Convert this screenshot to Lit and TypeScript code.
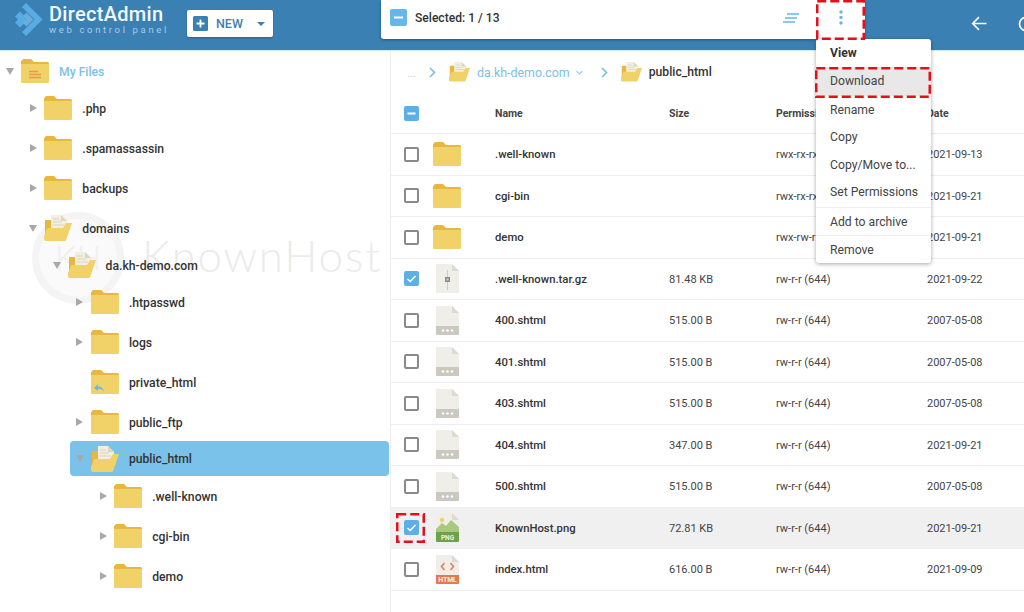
import { LitElement, html, css, svg } from "lit";
import { customElement } from "lit/decorators.js";

const folder = () => html`<svg class="ico" width="28" height="24" viewBox="0 0 28 24"><path d="M1 1.5a1.5 1.5 0 0 1 1.5-1.5H10l3 3h13.5A1.5 1.5 0 0 1 28 4.5V10H0V2z" fill="#e7b740"/><path d="M0 5h28v18a1 1 0 0 1-1 1H1a1 1 0 0 1-1-1z" fill="#f0d268"/></svg>`;
const homeFolder = () => html`<svg class="ico" width="28" height="24" viewBox="0 0 28 24"><path d="M1 1.5a1.5 1.5 0 0 1 1.5-1.5H10l3 3h13.5A1.5 1.5 0 0 1 28 4.5V10H0V2z" fill="#e7b740"/><path d="M0 5h28v18a1 1 0 0 1-1 1H1a1 1 0 0 1-1-1z" fill="#f0d268"/><path d="M8 12.500h9M8 15.500h12M8 18.500h12" stroke="#e89a4a" stroke-width="1.300"/></svg>`;
const linkFolder = () => html`<svg class="ico" width="28" height="24" viewBox="0 0 28 24"><path d="M1 1.5a1.5 1.5 0 0 1 1.5-1.5H10l3 3h13.5A1.5 1.5 0 0 1 28 4.5V10H0V2z" fill="#e7b740"/><path d="M0 5h28v18a1 1 0 0 1-1 1H1a1 1 0 0 1-1-1z" fill="#f0d268"/><path d="M3 18l4-4v2.500c3.500 0 5 1.500 6 5-1.500-2-3-2.500-6-2.500V21z" fill="#6db9e6"/></svg>`;
const openFolder = (w = 28) => html`<svg class="ico" width=${w} height=${(w * 26) / 28} viewBox="0 0 28 26"><path d="M1 25V6a1 1 0 0 1 1-1h6v20z" fill="#e7b740"/><path d="M7 0h10l6 6v10H7z" fill="#f3efdf"/><path d="M17 0l6 6h-6z" fill="#ddd6c0"/><path d="M9 4h6M9 7h9M9 10h11" stroke="#d9d3c2" stroke-width="1"/><path d="M0 24a2 2 0 0 0 2 2h18.500a2 2 0 0 0 1.800-1.300L28 8h-6l-3 5H4a1 1 0 0 0-1 .8L0 21z" fill="#f0d268"/></svg>`;
const fileShell = (extra: unknown) => html`<svg class="ico" width="23" height="29" viewBox="0 0 23 29"><path d="M1 0h15l7 7v21a1 1 0 0 1-1 1H1a1 1 0 0 1-1-1V1a1 1 0 0 1 1-1z" fill="#efeee9"/><path d="M16 0l7 7h-7z" fill="#dcdad2"/>${extra}</svg>`;
const gzFile = () => fileShell(svg`<path d="M11.500 6v20" stroke="#cfcdc6" stroke-width="1"/><rect x="9" y="13" width="5" height="5" fill="#8b8a84"/><rect x="10.500" y="14.500" width="2" height="2" fill="#d5d4cd"/>`);
const dotFile = () => fileShell(svg`<path d="M0 20h23v8a1 1 0 0 1-1 1H1a1 1 0 0 1-1-1z" fill="#cbc8c0"/><circle cx="7" cy="24.500" r="1.300" fill="#fff"/><circle cx="11.500" cy="24.500" r="1.300" fill="#fff"/><circle cx="16" cy="24.500" r="1.300" fill="#fff"/>`);
const pngFile = () => fileShell(svg`<circle cx="6" cy="7" r="2.200" fill="#ecd36c"/><path d="M0 16l6-6 4 3 5-6 8 7v8H0z" fill="#a9c97f"/><path d="M0 19h23v9a1 1 0 0 1-1 1H1a1 1 0 0 1-1-1z" fill="#6ea14c"/><text x="11.500" y="27" font-size="6.500" font-weight="700" fill="#e9f1df" text-anchor="middle" font-family="Roboto, sans-serif">PNG</text>`);
const htmlFile = () => fileShell(svg`<path d="M8.500 8l-3 3.500 3 3.500M14.500 8l3 3.500-3 3.500" fill="none" stroke="#e0815a" stroke-width="1.600"/><path d="M0 20h23v8a1 1 0 0 1-1 1H1a1 1 0 0 1-1-1z" fill="#e07b50"/><text x="11.500" y="27.300" font-size="6.800" font-weight="700" fill="#fdf0e8" text-anchor="middle" font-family="Roboto, sans-serif">HTML</text>`);

const tick = html`<svg width="15" height="15" viewBox="0 0 15 15"><path d="M3.500 8l2.700 2.500 5.300-5.500" fill="none" stroke="#fff" stroke-width="1.500"/></svg>`;
const minus = html`<svg width="15" height="15" viewBox="0 0 15 15"><path d="M3.500 7.500h8" stroke="#fff" stroke-width="2"/></svg>`;

type TreeRow = { name: string; level: number; icon: "folder" | "open" | "home" | "link"; arrow: "r" | "d" | ""; sel?: boolean };
const tree: TreeRow[] = [
  { name: "My Files", level: 0, icon: "home", arrow: "d" },
  { name: ".php", level: 1, icon: "folder", arrow: "r" },
  { name: ".spamassassin", level: 1, icon: "folder", arrow: "r" },
  { name: "backups", level: 1, icon: "folder", arrow: "r" },
  { name: "domains", level: 1, icon: "open", arrow: "d" },
  { name: "da.kh-demo.com", level: 2, icon: "open", arrow: "d" },
  { name: ".htpasswd", level: 3, icon: "folder", arrow: "r" },
  { name: "logs", level: 3, icon: "folder", arrow: "r" },
  { name: "private_html", level: 3, icon: "link", arrow: "" },
  { name: "public_ftp", level: 3, icon: "folder", arrow: "r" },
  { name: "public_html", level: 3, icon: "open", arrow: "d", sel: true },
  { name: ".well-known", level: 4, icon: "folder", arrow: "r" },
  { name: "cgi-bin", level: 4, icon: "folder", arrow: "r" },
  { name: "demo", level: 4, icon: "folder", arrow: "r" },
];

type FileRow = { name: string; size: string; perm: string; date: string; icon: () => unknown; checked?: boolean; active?: boolean };
const files: FileRow[] = [
  { name: ".well-known", size: "", perm: "rwx-rx-rx (755)", date: "2021-09-13", icon: folder },
  { name: "cgi-bin", size: "", perm: "rwx-rx-rx (755)", date: "2021-09-21", icon: folder },
  { name: "demo", size: "", perm: "rwx-rw-r (764)", date: "2021-09-21", icon: folder },
  { name: ".well-known.tar.gz", size: "81.48 KB", perm: "rw-r-r (644)", date: "2021-09-22", icon: gzFile, checked: true },
  { name: "400.shtml", size: "515.00 B", perm: "rw-r-r (644)", date: "2007-05-08", icon: dotFile },
  { name: "401.shtml", size: "515.00 B", perm: "rw-r-r (644)", date: "2007-05-08", icon: dotFile },
  { name: "403.shtml", size: "515.00 B", perm: "rw-r-r (644)", date: "2007-05-08", icon: dotFile },
  { name: "404.shtml", size: "347.00 B", perm: "rw-r-r (644)", date: "2021-09-21", icon: dotFile },
  { name: "500.shtml", size: "515.00 B", perm: "rw-r-r (644)", date: "2007-05-08", icon: dotFile },
  { name: "KnownHost.png", size: "72.81 KB", perm: "rw-r-r (644)", date: "2021-09-21", icon: pngFile, checked: true, active: true },
  { name: "index.html", size: "616.00 B", perm: "rw-r-r (644)", date: "2021-09-09", icon: htmlFile },
];

const menu = ["View", "Download", "Rename", "Copy", "Copy/Move to...", "Set Permissions", "Add to archive", "Remove"];

@customElement("app-root")
export class AppRoot extends LitElement {
  static styles = css`
    :host { display: block; position: relative; width: 1024px; height: 612px; overflow: hidden; background: #fff; font-family: Roboto, "Liberation Sans", sans-serif; color: #333; -webkit-font-smoothing: antialiased; }
    * { box-sizing: border-box; }
    .ico { display: block; flex: none; }
    header { height: 51px; background: #3a80b3; display: flex; align-items: center; overflow: hidden; border-bottom: 1px solid #d6ecf8; }
    .logo { margin-left: 14px; flex: none; margin-top: -12px; }
    .brand { margin-left: 5px; width: 118px; margin-top: -12px; }
    .brand b { display: block; font-size: 20px; line-height: 19px; font-weight: 500; color: #f2f8fc; letter-spacing: .3px; }
    .brand span { display: block; font-size: 9.500px; line-height: 9px; color: #a6cce6; letter-spacing: 2.650px; margin-top: 1px; white-space: nowrap; }
    .new { margin: -3px 0 0 20px; width: 86px; height: 27px; background: #fff; border-radius: 2px; display: flex; align-items: center; padding-left: 6px; color: #3a80b3; font-size: 12.500px; font-weight: 500; box-shadow: 0 1px 2px rgba(0,0,0,.25); }
    .new i { width: 15px; height: 15px; border-radius: 1.500px; background: #3a80b3; display: flex; margin-right: 8px; }
    .caret { margin-left: 14px; width: 0; height: 0; border: 4px solid transparent; border-top: 4.500px solid #3a80b3; border-bottom: 0; }
    .actions { margin-left: auto; margin-right: -10px; display: flex; align-items: center; gap: 31px; margin-top: -3px; }
    main { display: flex; height: 561px; }
    .tree { position: relative; width: 390px; flex: none; padding-top: 1.500px; }
    .wm { position: absolute; left: 32px; top: 161px; display: flex; align-items: center; gap: 18px; pointer-events: none; }
    .wm-c { width: 92px; height: 92px; border-radius: 50%; background: #fafafa; border: 7px solid #f4f4f4; display: flex; align-items: center; justify-content: center; font-size: 34px; font-weight: 300; color: #f0f0f0; }
    .wm-t { font-family: Lato, Roboto, sans-serif; font-weight: 300; font-size: 44px; line-height: 44px; color: #ebebeb; margin-top: -6px; white-space: nowrap; letter-spacing: 1.700px; }
    .node { position: relative; height: 37px; display: flex; align-items: center; padding-left: 5px; font-size: 12.200px; font-weight: 500; color: #333; white-space: nowrap; }
    .node.after { margin-top: 3px; }
    .node.sel { height: 35px; margin-top: .5px; margin-bottom: 1.500px; background: #7ac2ea; border-radius: 4px; margin-right: 1px; }
    .node.root .lab { color: #7cc0e9; }
    .arr { width: 10px; height: 10px; flex: none; margin-right: 6px; display: flex; align-items: center; justify-content: center; }
    .arr.r::before { content: ""; border: 4.500px solid transparent; border-left: 7px solid #a8a8a8; border-right: 0; }
    .arr.d::before { content: ""; border: 4.500px solid transparent; border-top: 7px solid #a8a8a8; border-bottom: 0; }
    .lab { margin-left: 10px; padding-top: 1px; }
    .content { flex: 1; border-left: 1px solid #eeeeee; }
    .crumbs { height: 42px; display: flex; align-items: center; font-size: 12.400px; font-weight: 400; color: #7cc0e9; padding-left: 16px; white-space: nowrap; }
    .crumbs .dots { width: 9px; font-size: 11px; margin-top: 2px; color: #a9d6f1; }
    .crumbs .chev { margin: 0 13px; }
    .crumbs .name { margin-left: 7px; }
    .crumbs .cur { color: #333; font-weight: 500; margin-left: 7px; font-size: 12.200px; }
    .crumbs .mini { margin-left: 6px; margin-right: 18px; }
    .crumbs .chev2 { margin-right: 13px; }
    .grow { display: grid; grid-template-columns: 29px 62px 174px 107px 151px 1fr; align-items: center; padding-left: 13px; font-size: 11px; color: #444; border-bottom: 1px solid #eeeeee; height: 41.500px; white-space: nowrap; }
    .grow.head { height: 41px; font-weight: 700; font-size: 10.500px; color: #444; }
    .grow.active { background: #f0f0f0; }
    .grow .txt { padding-top: 1px; }
    .grow .fname { font-weight: 500; font-size: 11.300px; color: #333; }
    .cell-i { display: flex; justify-content: center; width: 28px; }
    .cb { width: 15px; height: 15px; border-radius: 2px; border: 2px solid #8a8a8a; background: #fff; display: block; }
    .cb.on { border: 0; background: #5db0e6; }
    .cb.mix { display: flex; }
    .toolbar { position: absolute; left: 381px; top: 0; width: 484px; height: 39px; background: #fff; border-radius: 0 0 3px 3px; box-shadow: 0 1px 3px rgba(0,0,0,.35); display: flex; align-items: center; padding: 0 0 4px 9px; font-size: 12.100px; font-weight: 500; color: #333; }
    .toolbar .big { width: 17px; height: 17px; border-radius: 2px; background: #66b6ea; display: flex; align-items: center; justify-content: center; margin-right: 8px; }
    .toolbar .list { margin-left: auto; margin-right: 40px; }
    .toolbar .more { margin-right: 22px; }
    .menu { position: absolute; left: 816px; top: 39px; width: 115px; height: 224px; background: #fff; border-radius: 3px; box-shadow: 0 1px 4px rgba(0,0,0,.35); font-size: 12.200px; color: #444; }
    .menu div { height: 28px; display: flex; align-items: center; padding-left: 14px; white-space: nowrap; }
    .menu .v { height: 28px; padding-bottom: 1px; font-weight: 700; color: #333; }
    .menu .dl { height: 29px; padding-bottom: 2px; background: #e8e8e8; }
    .menu .rn { height: 27px; }
    .menu .sp { padding-bottom: 2px; }
    .menu .sep { border-top: 1px solid #eeeeee; }
    .mark { position: absolute; display: block; pointer-events: none; }
    .m1 { left: 816px; top: 0; }
    .m2 { left: 815px; top: 67px; }
    .m3 { left: 396px; top: 513px; }
  `;

  private mark(cls: string, w: number, h: number) {
    return html`<svg class="mark ${cls}" width=${w} height=${h} viewBox="0 0 ${w} ${h}"><rect x="1.250" y="1.250" width=${w - 2.5} height=${h - 2.5} fill="none" stroke="#e3101b" stroke-width="2.500" stroke-dasharray="9 4"/></svg>`;
  }

  private treeIcon(n: TreeRow) {
    if (n.icon === "open") return openFolder();
    if (n.icon === "home") return homeFolder();
    if (n.icon === "link") return linkFolder();
    return folder();
  }

  render() {
    return html`
      <header>
        <svg class="logo" width="30" height="33" viewBox="0 0 30 33"><path d="M12 0l16.500 16.500L12 33l-4-4 12.500-12.500L8 4z" fill="#57ace4"/><path d="M6 8.500l8 8-8 8-5-5 3-3-3-3z" fill="#57ace4"/><path d="M12.500 9.500l7 7-7 7-3-3 4-4-4-4z" fill="#8cc8ef" opacity=".6"/></svg>
        <div class="brand"><b>DirectAdmin</b><span>web control panel</span></div>
        <div class="new"><i><svg width="15" height="15" viewBox="0 0 15 15"><path d="M7.500 3.500v8M3.500 7.500h8" stroke="#fff" stroke-width="1.800"/></svg></i>NEW<span class="caret"></span></div>
        <div class="actions">
          <svg width="16" height="15" viewBox="0 0 16 15"><path d="M15.500 7.500H2M8 1.200L1.700 7.500 8 13.800" fill="none" stroke="#f4f9fc" stroke-width="1.700"/></svg>
          <svg width="16" height="16" viewBox="0 0 16 16"><circle cx="8" cy="8" r="6.500" fill="none" stroke="#f4f9fc" stroke-width="1.800"/></svg>
        </div>
      </header>
      <main>
        <section class="tree">
          <div class="wm"><div class="wm-c">KH</div><div class="wm-t">KnownHost</div></div>
          ${tree.map((n, i) => html`
            <div class="node ${i > 0 && tree[i - 1].icon !== "open" && tree[i - 1].icon !== "home" ? "after" : ""} ${n.sel ? "sel" : ""} ${i === 0 ? "root" : ""}" style="margin-left:${Math.round(n.level * 23.3 * 10) / 10}px">
              <span class="arr ${n.arrow}"></span>
              ${this.treeIcon(n)}
              <span class="lab">${n.name}</span>
            </div>`)}
        </section>
        <section class="content">
          <div class="crumbs">
            <span class="dots">...</span>
            <svg class="chev" width="7" height="11" viewBox="0 0 7 11"><path d="M1 1l4.500 4.500L1 10" fill="none" stroke="#7cc0e9" stroke-width="1.700"/></svg>
            ${openFolder(21)}
            <span class="name">da.kh-demo.com</span>
            <svg class="mini" width="7" height="5" viewBox="0 0 7 5"><path d="M.5 1l3 3 3-3" fill="none" stroke="#9ccfee" stroke-width="1.100"/></svg>
            <svg class="chev2" width="7" height="11" viewBox="0 0 7 11"><path d="M1 1l4.500 4.500L1 10" fill="none" stroke="#7cc0e9" stroke-width="1.700"/></svg>
            ${openFolder(21)}
            <span class="cur">public_html</span>
          </div>
          <div class="grow head">
            <span class="cb on mix">${minus}</span><span></span><span>Name</span><span>Size</span><span>Permissions</span><span>Date</span>
          </div>
          ${files.map((f) => html`
            <div class="grow ${f.active ? "active" : ""}">
              <span class="cb ${f.checked ? "on" : ""}">${f.checked ? tick : ""}</span>
              <span class="cell-i">${f.icon()}</span>
              <span class="txt fname">${f.name}</span>
              <span class="txt">${f.size}</span>
              <span class="txt">${f.perm}</span>
              <span class="txt">${f.date}</span>
            </div>`)}
        </section>
      </main>
      <div class="toolbar">
        <span class="big"><svg width="17" height="17" viewBox="0 0 17 17"><path d="M4 8.500h9" stroke="#fff" stroke-width="2"/></svg></span>
        <span>Selected: 1 / 13</span>
        <svg class="list" width="16" height="10" viewBox="0 0 16 10"><path d="M4 1h12M2 5h12M0 9h12" stroke="#66b6ea" stroke-width="1.500"/></svg>
        <svg class="more" width="4" height="15" viewBox="0 0 4 15"><circle cx="2" cy="2" r="1.700" fill="#66b6ea"/><circle cx="2" cy="7.500" r="1.700" fill="#66b6ea"/><circle cx="2" cy="13" r="1.700" fill="#66b6ea"/></svg>
      </div>
      <div class="menu">
        ${menu.map((m, i) => html`<div class="${i === 0 ? "v" : ""} ${i === 1 ? "dl" : ""} ${i === 2 ? "rn" : ""} ${i === 5 ? "sp" : ""} ${i >= 6 ? "sep" : ""}">${m}</div>`)}
      </div>
      ${this.mark("m1", 49, 40)}
      ${this.mark("m2", 116, 31)}
      ${this.mark("m3", 29, 30)}
    `;
  }
}
